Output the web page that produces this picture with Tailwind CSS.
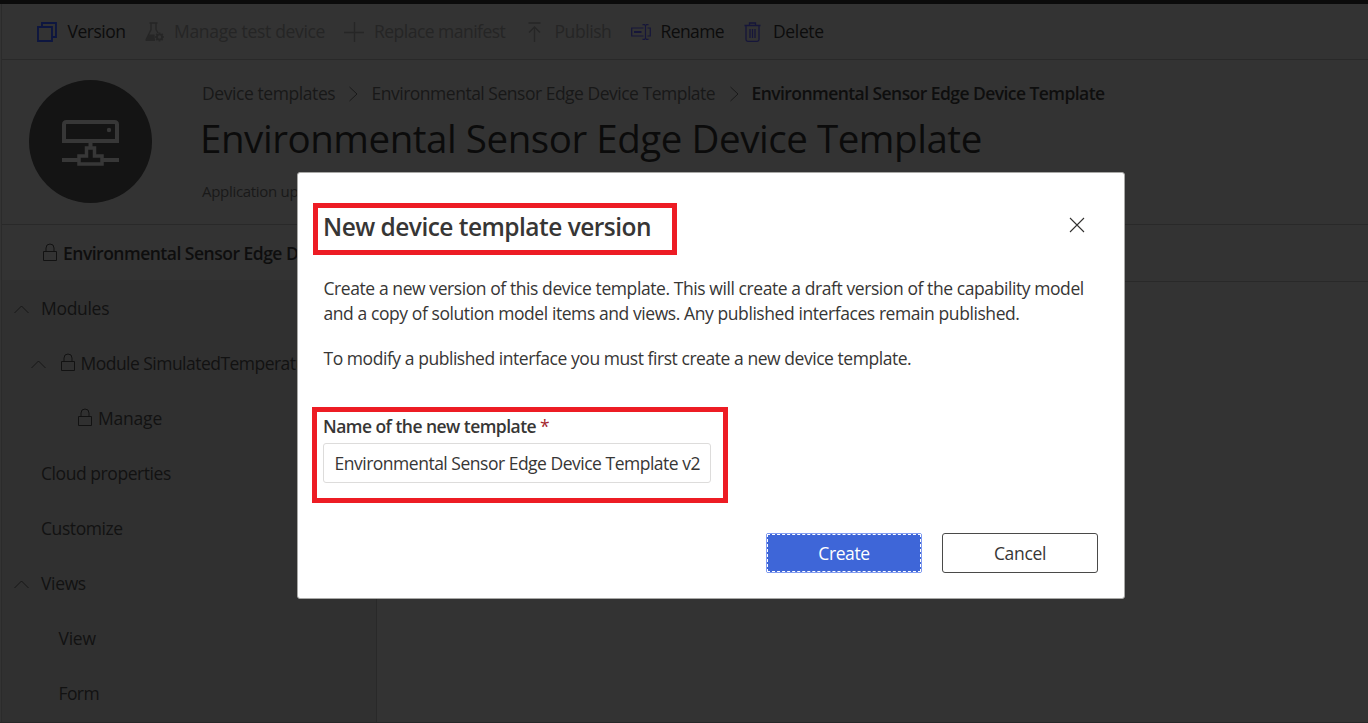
<!DOCTYPE html>
<html lang="en">
<head>
<meta charset="utf-8">
<title>New device template version</title>
<script src="https://cdn.jsdelivr.net/npm/@tailwindcss/browser@4"></script>
</head>
<body class="relative h-[723px] w-[1368px] overflow-hidden bg-[#333333] font-['Open_Sans','Noto_Sans',sans-serif] text-[17.5px] leading-[25px] whitespace-nowrap text-[#121212]">

<div class="flex h-[723px] flex-col border-t-4 border-[#0b0b0b]">
  <div class="flex min-h-0 flex-1 flex-col border-b border-b-[#272727] pl-px">
  <div class="flex min-h-0 flex-1 flex-col border-l border-[#2b2b2b]">

    <!-- Command bar -->
    <div class="flex h-14 shrink-0 items-center border-b border-[#292929] pl-[35px] text-[#0c0c0c]">
      <div class="flex w-[108px] items-center gap-[10.500px]">
        <svg class="size-5 shrink-0" viewBox="0 0 20 20" fill="none" stroke="#0d1640" stroke-width="1.8"><path d="M5 4.500V1h14v14h-3.500"/><path d="M1 5h14v14H1z"/></svg>
        <span class="tracking-[-0.5px]">Version</span>
      </div>
      <div class="flex w-[199px] items-center gap-[9px] text-[#252525]">
        <svg class="size-5 shrink-0" viewBox="0 0 20 20" fill="none" stroke="#262626" stroke-width="1.4"><path d="M4.500 1h8M6 1v6.500L1.500 17M11 1v6.500l2 3.500"/><path d="M4 12.500h5.500L10 19H1.500Q0 19 .5 17.500z" fill="#262626" stroke="none"/><circle cx="14.500" cy="15" r="2.600" stroke-width="1.800"/><path d="M14.500 10.500v2M14.500 17.500v2M10 15h2M17 15h2M11.300 11.800l1.400 1.400M16.300 16.800l1.400 1.400M17.700 11.800l-1.400 1.400M12.700 16.800l-1.400 1.400" stroke-width="1.600"/></svg>
        <span class="tracking-[-0.32px]">Manage test device</span>
      </div>
      <div class="flex w-[181px] items-center gap-[10px] text-[#252525]">
        <svg class="size-5 shrink-0" viewBox="0 0 20 20" fill="none" stroke="#262626" stroke-width="1.3"><path d="M10.500 0v20M0 10.500h20"/></svg>
        <span class="tracking-[-0.52px]">Replace manifest</span>
      </div>
      <div class="flex w-[106px] items-center gap-[9.500px] text-[#252525]">
        <svg class="size-5 shrink-0" viewBox="0 0 20 20" fill="none" stroke="#262626" stroke-width="1.3"><path d="M3.500 1h12M9.500 20V5M4 10.500 9.500 5l5.500 5.500"/></svg>
        <span class="tracking-[-0.42px]">Publish</span>
      </div>
      <div class="flex w-[112px] items-center gap-[9.500px]">
        <svg class="size-5 shrink-0" viewBox="0 0 20 20" fill="none" stroke="#16163a" stroke-width="1.2"><path d="M12.500 6H.7v8h11.800M16.500 6h2.800v8h-2.800"/><path d="M3 10h7.500" stroke-width="2"/><path d="M11.500 2.700h2l1 1 1-1h2M11.500 17.300h2l1-1 1 1h2M14.500 3.500v13"/></svg>
        <span class="tracking-[-0.6px]">Rename</span>
      </div>
      <div class="flex items-center gap-[10px]">
        <svg class="size-5 shrink-0" viewBox="0 0 20 20" fill="none" stroke="#16163a" stroke-width="1.3"><path d="M1.500 3.500h16M6.500 3V1h6v2M3 4v13.500q0 1.800 1.800 1.800h9.400q1.800 0 1.800-1.800V4M7 7v9M9.500 7v9M12 7v9"/></svg>
        <span class="tracking-[-0.35px]">Delete</span>
      </div>
    </div>

    <!-- Template header -->
    <div class="flex h-[165px] shrink-0 border-b border-[#292929] pl-[26.500px]">
      <div class="mt-[20px] flex size-[123px] shrink-0 items-center justify-center rounded-full bg-[#141414]">
        <svg class="mt-[2px] h-[46px] w-[57px]" viewBox="0 0 57 46" fill="none" stroke="#373737"><path d="M2 21V4.500Q2 2 4.500 2h48Q55 2 55 4.500V21z" stroke-width="4"/><circle cx="47" cy="10" r="2.200" fill="#373737" stroke="none"/><path d="M28.500 22v6M0 40h16M41 40h16" stroke-width="4"/><path d="M17 36h7.500v-8h8v8H40v8H17z" stroke-width="3.500"/><path d="M28.500 31v8" stroke="#141414" stroke-width="2.500"/></svg>
      </div>
      <div class="ml-[50.500px] flex flex-col">
        <div class="mt-[21px] flex h-[25px] items-center text-[#181818]">
          <span class="w-[147px] tracking-[-0.42px]">Device templates</span>
          <svg class="mr-[13.500px] h-4 w-[9px]" viewBox="0 0 9 16" fill="none" stroke="#1a1a1a"><path d="m.5 1 7.500 7-7.500 7"/></svg>
          <span class="w-[358px] tracking-[-0.49px]">Environmental Sensor Edge Device Template</span>
          <svg class="mr-[13px] h-4 w-[9px]" viewBox="0 0 9 16" fill="none" stroke="#1a1a1a"><path d="m.5 1 7.500 7-7.500 7"/></svg>
          <span class="font-semibold tracking-[-0.56px] text-[#0e0e0e]">Environmental Sensor Edge Device Template</span>
        </div>
        <h1 class="mt-[7px] -ml-[2px] text-[38.500px] leading-[50px] tracking-[-0.45px] text-[#0b0b0b]">Environmental Sensor Edge Device Template</h1>
        <div class="mt-[16px] text-[15px] tracking-[-0.303px] text-[#191919]">Application up</div>
      </div>
    </div>

    <div class="flex min-h-0 flex-1">
      <!-- Template outline -->
      <nav class="flex w-[375px] shrink-0 flex-col border-r border-[#292929] bg-[#303030]">
        <div class="flex h-[55px] items-center gap-[5px] bg-[#333333] pt-[2px] pl-[40px] font-semibold text-[#0e0e0e]">
          <svg class="-mt-[3px] h-[19px] w-4 shrink-0" viewBox="0 0 16 19" fill="none" stroke="#121212"><path d="M1.500 8.500h13v9h-13zM4 8.500V5q0-4 4-4t4 4v3.500"/></svg>
          <span class="tracking-[-0.5px]">Environmental Sensor Edge D</span>
        </div>
        <div class="flex h-[55px] items-center pt-[2px] pl-[12px]">
          <svg class="mt-[2px] mr-[12px] h-[9px] w-[15px] shrink-0" viewBox="0 0 15 9" fill="none" stroke="#171717"><path d="m.5 8 7-7 7 7"/></svg>
          <span class="tracking-[-0.3px]">Modules</span>
        </div>
        <div class="flex h-[55px] items-center pt-[2px] pl-[29px]">
          <svg class="mt-[2px] mr-[13.500px] h-[9px] w-[15px] shrink-0" viewBox="0 0 15 9" fill="none" stroke="#171717"><path d="m.5 8 7-7 7 7"/></svg>
          <svg class="-mt-[3px] mr-[5px] h-[19px] w-4 shrink-0" viewBox="0 0 16 19" fill="none" stroke="#121212"><path d="M1.500 8.500h13v9h-13zM4 8.500V5q0-4 4-4t4 4v3.500"/></svg>
          <span class="w-[219px] overflow-hidden tracking-[-0.53px]">Module SimulatedTemperatureSensor</span>
        </div>
        <div class="flex h-[55px] items-center gap-[5px] pt-[2px] pl-[75px]">
          <svg class="-mt-[3px] h-[19px] w-4 shrink-0" viewBox="0 0 16 19" fill="none" stroke="#121212"><path d="M1.500 8.500h13v9h-13zM4 8.500V5q0-4 4-4t4 4v3.500"/></svg>
          <span class="tracking-[-0.2px]">Manage</span>
        </div>
        <div class="flex h-[55px] items-center pt-[2px] pl-[39px]"><span class="tracking-[-0.44px]">Cloud properties</span></div>
        <div class="flex h-[55px] items-center pt-[2px] pl-[39px]"><span class="tracking-[-0.42px]">Customize</span></div>
        <div class="flex h-[55px] items-center pt-[2px] pl-[12px]">
          <svg class="mt-[2px] mr-[12px] h-[9px] w-[15px] shrink-0" viewBox="0 0 15 9" fill="none" stroke="#171717"><path d="m.5 8 7-7 7 7"/></svg>
          <span class="tracking-[-0.35px]">Views</span>
        </div>
        <div class="flex h-[55px] items-center pt-[2px] pl-[56.500px]"><span class="tracking-[-0.25px]">View</span></div>
        <div class="flex h-[53px] items-center pt-[3px] pl-[56.500px]"><span class="tracking-[-0.6px]">Form</span></div>
      </nav>
      <div class="flex-1"><div class="h-[57px] border-b border-[#292929]"></div></div>
    </div>
  </div>
  </div>
</div>

<!-- Dialog -->
<div role="dialog" class="absolute top-[172px] left-[297px] flex h-[427px] w-[828px] flex-col rounded-[3px] border border-[#a8a8a6] bg-white text-[#373635]">
  <div class="flex justify-between pt-[30px] pr-[39px] pl-[15px]">
    <h2 class="flex h-[52px] w-[364px] items-center border-[5px] border-[#ed1c24] pb-[6px] pl-[5px] text-[24.500px] font-semibold tracking-[-0.53px]">New device template version</h2>
    <svg class="mt-[14px] size-4" viewBox="0 0 16 16" fill="none" stroke="#323130" stroke-width="1.100"><path d="m1 1 14 14M15 1 1 15"/></svg>
  </div>
  <div class="mt-[21px] pl-[25.500px]">
    <p class="tracking-[-0.42px]">Create a new version of this device template. This will create a draft version of the capability model<br>and a copy of solution model items and views. Any published interfaces remain published.</p>
    <p class="mt-[20px] tracking-[-0.45px]">To modify a published interface you must first create a new device template.</p>
  </div>
  <div class="mt-[36px] ml-[14px] h-[96px] w-[416px] border-[5px] border-[#ed1c24] pt-[2px] pl-[6px]">
    <label class="block font-semibold tracking-[-0.54px]">Name of the new template <span class="font-normal text-[#a4262c]">*</span></label>
    <div class="mt-[4px] flex h-10 w-[388px] items-center rounded-[3px] border border-[#dddcdb] pl-[10.500px] tracking-[-0.49px]">Environmental Sensor Edge Device Template v2</div>
  </div>
  <div class="mt-[30px] flex justify-end gap-5 pr-[26px]">
    <button class="flex h-10 w-[156px] rounded-[2px] border border-[#7f9af0] bg-[#3e66d8] text-white"><span class="flex h-full w-full items-center justify-center border border-dashed border-white tracking-[-0.42px]">Create</span></button>
    <button class="flex h-10 w-[156px] items-center justify-center rounded-[3px] border border-[#4a4a49] bg-white tracking-[-0.33px]">Cancel</button>
  </div>
</div>
</body>
</html>
